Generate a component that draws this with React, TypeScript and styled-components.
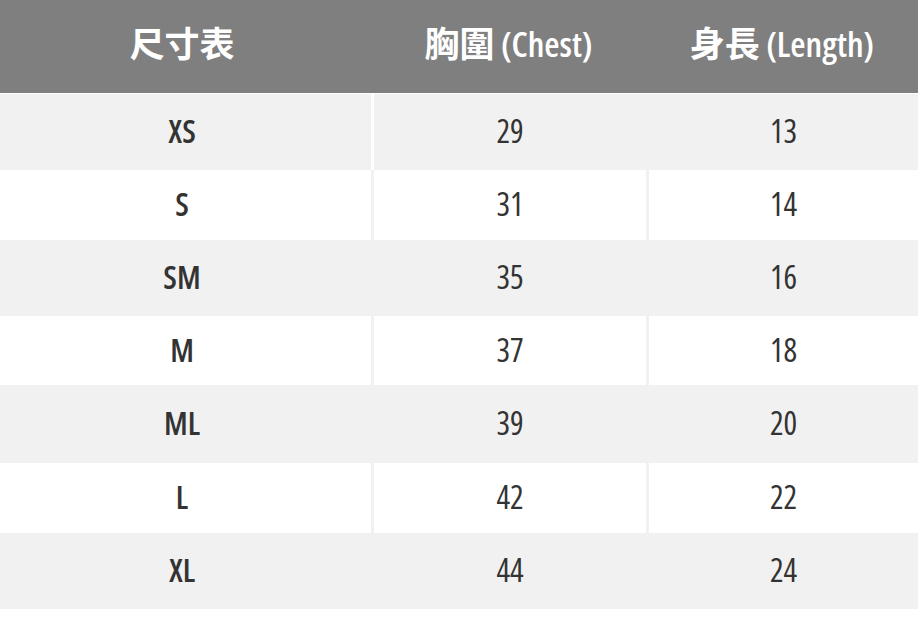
import * as React from 'react';
import styled, { createGlobalStyle } from 'styled-components';

const GlobalStyle = createGlobalStyle`
	html, body {
		margin: 0;
		padding: 0;
		background: #ffffff;
	}
	body {
		font-family: 'Open Sans', 'Noto Sans CJK TC', sans-serif;
	}
`;

const SizeTable = styled.section`
	width: 918px;
	display: flex;
	flex-direction: column;
`;

const HeaderRow = styled.div`
	display: flex;
	height: 93px;
	margin-bottom: 1px;
	background: #7f7f7f;
`;

const HeaderCell = styled.div<{ $width: number; $shift?: number }>`
	width: ${(p) => p.$width}px;
	display: flex;
	align-items: center;
	justify-content: center;
	padding-bottom: 10px;
	padding-right: ${(p) => p.$shift || 0}px;
	box-sizing: border-box;
	color: #ffffff;
	font-family: 'Open Sans', 'Noto Sans CJK TC', sans-serif;
	font-stretch: 87.5%;
	font-weight: 600;
	font-size: 35px;
	white-space: pre;
`;

const Row = styled.div<{ $height: number; $striped: boolean }>`
	display: flex;
	height: ${(p) => p.$height}px;
	background: ${(p) => (p.$striped ? '#f1f1f1' : '#ffffff')};
`;

const Cell = styled.div<{ $width: number; $sep: string; $label?: boolean }>`
	width: ${(p) => p.$width}px;
	box-sizing: border-box;
	display: flex;
	align-items: center;
	justify-content: center;
	padding-right: ${(p) => (p.$label ? 7 : 0)}px;
	padding-bottom: 3px;
	border-left: 3px solid ${(p) => p.$sep};
	color: #333333;
	font-family: 'Open Sans', sans-serif;
	font-stretch: ${(p) => (p.$label ? '76%' : '78%')};
	font-weight: ${(p) => (p.$label ? 560 : 400)};
	font-size: 32px;
	&:first-child {
		border-left: none;
	}
`;

const widths = [371, 275, 272];

const rows = [
	{ size: 'XS', chest: '29', length: '13', height: 76 },
	{ size: 'S', chest: '31', length: '14', height: 70 },
	{ size: 'SM', chest: '35', length: '16', height: 76 },
	{ size: 'M', chest: '37', length: '18', height: 69 },
	{ size: 'ML', chest: '39', length: '20', height: 78 },
	{ size: 'L', chest: '42', length: '22', height: 70 },
	{ size: 'XL', chest: '44', length: '24', height: 76 },
];

export default function App(): JSX.Element {
	return (
		<>
			<GlobalStyle />
			<SizeTable>
				<HeaderRow>
					<HeaderCell $width={widths[0]} $shift={7}>
						尺寸表
					</HeaderCell>
					<HeaderCell $width={widths[1]}>胸圍 (Chest)</HeaderCell>
					<HeaderCell $width={widths[2]}>身長 (Length)</HeaderCell>
				</HeaderRow>
				{rows.map((r, i) => {
					const striped = i % 2 === 0;
					// grey gaps between cells; the first grey row has a white one
					const sep = '#f1f1f1';
					const firstSep = i === 0 ? '#ffffff' : sep;
					return (
						<Row key={r.size} $height={r.height} $striped={striped}>
							<Cell $width={widths[0]} $sep={sep} $label>
								{r.size}
							</Cell>
							<Cell $width={widths[1]} $sep={firstSep}>
								{r.chest}
							</Cell>
							<Cell $width={widths[2]} $sep={sep}>
								{r.length}
							</Cell>
						</Row>
					);
				})}
			</SizeTable>
		</>
	);
}
